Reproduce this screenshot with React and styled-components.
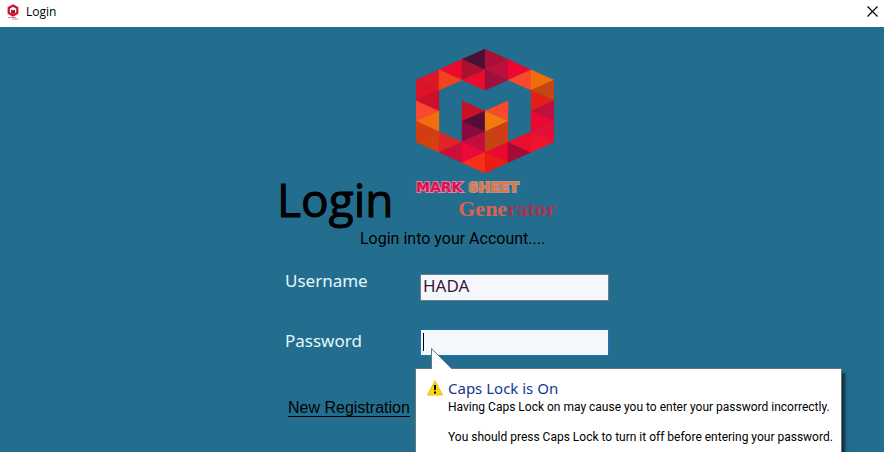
import React from "react";
import styled, { createGlobalStyle } from "styled-components";

const GlobalStyle = createGlobalStyle`
  *, *::before, *::after { box-sizing: border-box; }
  html, body { margin: 0; background: #236e8f; }
  h1, h2, p { margin: 0; font-weight: 400; }
`;

const uiFont = `"Open Sans", "Noto Sans", sans-serif`;

const Window = styled.div`
  display: flex;
  flex-direction: column;
  height: 100vh;
  overflow: hidden;
  background: #236e8f;
  font-family: ${uiFont};
  color: #000;
`;

const TitleBar = styled.header`
  display: flex;
  align-items: center;
  gap: 7px;
  flex: none;
  height: 27px;
  padding: 0 6px 4px 7px;
  background: #fff;
  font-size: 12px;
  line-height: 16px;
`;

const CloseButton = styled.button`
  display: flex;
  margin-left: auto;
  padding: 0;
  border: 0;
  background: none;
`;

const Main = styled.main`
  display: flex;
  justify-content: center;
  padding-top: 22px;
`;

const Form = styled.form`
  flex: 0 1 334px;
  display: flex;
  flex-direction: column;
  padding-left: 2px;
`;

const Heading = styled.div`
  display: flex;
  align-items: flex-end;
  gap: 24px;
`;

const Title = styled.h1`
  width: 115px;
  font-family: "Open Sans", sans-serif;
  font-size: 46px;
  line-height: 36px;
  -webkit-text-stroke: 1px #000;
`;

const Brand = styled.div`
  display: flex;
  flex-direction: column;
  width: 140px;
`;

const Word = styled.span`
  font-family: ${(p) => (p.$serif ? `"Liberation Serif", serif` : `"DejaVu Sans", sans-serif`)};
  font-weight: 700;
  font-size: ${(p) => (p.$serif ? "22px" : "14px")};
  line-height: ${(p) => (p.$serif ? "16px" : "28px")};
  color: ${(p) => p.$color};
  -webkit-text-stroke: ${(p) => (p.$edge ? `2px ${p.$edge}` : "0")};
  paint-order: stroke fill;
`;

const BrandLine = styled.div`
  display: flex;
  gap: ${(p) => (p.$end ? "0" : "6px")};
  justify-content: ${(p) => (p.$end ? "flex-end" : "flex-start")};
`;

const Subtitle = styled.h2`
  padding-left: 83px;
  margin-top: 10px;
  font-family: Roboto, sans-serif;
  font-size: 16px;
  font-weight: 400;
  line-height: 24px;
  white-space: nowrap;
`;

const Fields = styled.div`
  display: flex;
  flex-direction: column;
  gap: 28px;
  margin-top: 23px;
  padding-left: 8px;
`;

const Row = styled.div`
  display: flex;
  align-items: ${(p) => (p.$centered ? "center" : "flex-start")};
`;

const Label = styled.label`
  width: 135px;
  padding-bottom: 4px;
  font-family: "Noto Sans", sans-serif;
  font-size: 17px;
  line-height: 14px;
  color: #e4f7fb;
`;

const Control = styled.div`
  position: relative;
  flex: 1;
`;

const Input = styled.input`
  display: block;
  width: 100%;
  height: 27px;
  padding: 0 2px 4px;
  border: 1px solid ${(p) => (p.$active ? "#1874ba" : "#6d7c88")};
  border-radius: 0;
  outline: 0;
  background: #f4f8fd;
  background-image: ${(p) => (p.$active ? "linear-gradient(#000, #000)" : "none")};
  background-repeat: no-repeat;
  background-position: 2px 3px;
  background-size: 1px 18px;
  font-family: "Noto Sans", sans-serif;
  font-size: 17px;
  color: #431238;
`;

const Register = styled.a`
  align-self: flex-start;
  margin: 43px 0 0 11px;
  border-bottom: 1px solid #000;
  font-family: "Liberation Sans", Arial, sans-serif;
  font-size: 16px;
  line-height: 17px;
  color: #000;
  text-decoration: none;
`;

const Balloon = styled.div`
  position: absolute;
  top: 39px;
  left: -5px;
  display: grid;
  grid-template-columns: 16px auto;
  column-gap: 5px;
  padding: 9px 8px 12px 11px;
  border: 1px solid #6f7479;
  background: #fff;
  box-shadow: 4px 4px 3px -1px rgba(0, 0, 0, 0.6);
  white-space: nowrap;
`;

const Pointer = styled.svg`
  position: absolute;
  top: -21px;
  left: 15px;
`;

const BalloonTitle = styled.p`
  font-family: "Noto Sans", sans-serif;
  font-size: 15px;
  line-height: 20px;
  padding-bottom: 2px;
  color: #143695;
`;

const BalloonText = styled.p`
  grid-column: 2;
  font-family: Roboto, sans-serif;
  font-size: 12px;
  line-height: 15px;
  & + & { margin-top: 15px; }
`;

const WarningIcon = styled.svg`
  margin-top: 2px;
`;

// Each facet: three [column, row] vertices on the triangular grid, then its fill.
const facets = [
  [1, 2, 1, 4, 0, 3, "#d9182a"], [0, 3, 0, 5, 1, 4, "#dc1329"], [1, 4, 1, 6, 0, 5, "#cc1029"],
  [0, 5, 0, 7, 1, 6, "#fb4732"], [1, 6, 1, 8, 0, 7, "#f26d0d"], [0, 7, 0, 9, 1, 8, "#d33d10"],
  [1, 8, 1, 10, 0, 9, "#d6400f"],
  [2, 1, 2, 3, 1, 2, "#eb0a2b"], [1, 2, 1, 4, 2, 3, "#f3421e"],
  [1, 8, 1, 10, 2, 9, "#e02624"], [2, 9, 2, 11, 1, 10, "#cb0f37"],
  [3, 0, 3, 2, 2, 1, "#4b1035"], [2, 1, 2, 3, 3, 2, "#ab102d"], [3, 2, 3, 4, 2, 3, "#eb0b2e"],
  [2, 5, 2, 7, 3, 6, "#ca1029"], [3, 6, 3, 8, 2, 7, "#580a38"], [2, 7, 2, 9, 3, 8, "#8c0a3b"],
  [3, 8, 3, 10, 2, 9, "#c20e3d"], [2, 9, 2, 11, 3, 10, "#ea0939"], [3, 10, 3, 12, 2, 11, "#f83017"],
  [3, 0, 3, 2, 4, 1, "#ad1036"], [4, 1, 4, 3, 3, 2, "#bb103c"], [3, 2, 3, 4, 4, 3, "#a10f3e"],
  [4, 5, 4, 7, 3, 6, "#f94a2d"], [3, 6, 3, 8, 4, 7, "#f27b0d"], [4, 7, 4, 9, 3, 8, "#cf3d17"],
  [3, 8, 3, 10, 4, 9, "#c64412"], [4, 9, 4, 11, 3, 10, "#eb092e"], [3, 10, 3, 12, 4, 11, "#e91c17"],
  [4, 1, 4, 3, 5, 2, "#eb0731"], [5, 2, 5, 4, 4, 3, "#fa482d"],
  [4, 9, 4, 11, 5, 10, "#a60b35"], [5, 8, 5, 10, 4, 9, "#ea102d"],
  [5, 2, 5, 4, 6, 3, "#f06d0b"], [6, 3, 6, 5, 5, 4, "#c54513"], [5, 4, 5, 6, 6, 5, "#e22019"],
  [6, 5, 6, 7, 5, 6, "#c30f3e"], [5, 6, 5, 8, 6, 7, "#eb0830"], [6, 7, 6, 9, 5, 8, "#e21039"],
  [5, 8, 5, 10, 6, 9, "#f0122f"],
];

function Emblem({ width, height }) {
  return (
    <svg width={width} height={height} viewBox="0 0 414 372" aria-hidden="true">
      {facets.map(([a, b, c, d, e, f, fill], i) => (
        <polygon
          key={i}
          points={`${a * 69},${b * 31} ${c * 69},${d * 31} ${e * 69},${f * 31}`}
          fill={fill}
          stroke={fill}
          strokeWidth="1"
        />
      ))}
    </svg>
  );
}

function AppIcon() {
  return (
    <svg width="12" height="16" viewBox="0 0 12 16" aria-hidden="true">
      <path d="M6 1.5 10.3 4v5L6 11.500 1.700 9V4Z" fill="none" stroke="#c9162f" strokeWidth="2.200" />
      <path d="M4 5.500 6 6.500l2-1V9L6 10 4 9Z" fill="#a5122f" />
      <path d="M1 13.500h8M5 15h6" stroke="#d9808c" strokeWidth="1" />
    </svg>
  );
}

export default function App() {
  return (
    <Window>
      <GlobalStyle />
      <TitleBar>
        <AppIcon />
        <span>Login</span>
        <CloseButton type="button" aria-label="Close">
          <svg width="11" height="11" viewBox="0 0 11 11">
            <path d="M.5.5l10 10M10.500.5l-10 10" stroke="#000" strokeWidth="1.200" />
          </svg>
        </CloseButton>
      </TitleBar>
      <Main>
        <Form onSubmit={(e) => e.preventDefault()}>
          <Heading>
            <Title>Login</Title>
            <Brand>
              <Emblem width={138} height={124} />
              <BrandLine>
                <Word $color="#d91346" $edge="#e37fae">MARK</Word>
                <Word $color="#d87948" $edge="#b79095">SHEET</Word>
              </BrandLine>
              <BrandLine $end>
                <Word $serif $color="#d9634e">Gene</Word>
                <Word $serif $color="#a93450">rator</Word>
              </BrandLine>
            </Brand>
          </Heading>
          <Subtitle>Login into your Account....</Subtitle>
          <Fields>
            <Row>
              <Label htmlFor="username">Username</Label>
              <Control>
                <Input id="username" type="text" defaultValue="HADA" />
              </Control>
            </Row>
            <Row $centered>
              <Label htmlFor="password">Password</Label>
              <Control>
                <Input id="password" type="password" $active aria-describedby="caps-lock" />
                <Balloon id="caps-lock" role="tooltip">
                  <Pointer width="22" height="22" viewBox="0 0 22 22" aria-hidden="true">
                    <path d="M.5 22V.5L21 21v1Z" fill="#fff" />
                    <path d="M.5 21V.5L21 21" fill="none" stroke="#6f7479" />
                  </Pointer>
                  <WarningIcon width="16" height="16" viewBox="0 0 16 16" aria-hidden="true">
                    <path d="M8 .8 15.500 15H.5Z" fill="#ffd411" stroke="#eabd18" strokeLinejoin="round" />
                    <path d="M8 5v5M8 11.500v2" stroke="#000" strokeWidth="2" />
                  </WarningIcon>
                  <BalloonTitle>Caps Lock is On</BalloonTitle>
                  <BalloonText>Having Caps Lock on may cause you to enter your password incorrectly.</BalloonText>
                  <BalloonText>You should press Caps Lock to turn it off before entering your password.</BalloonText>
                </Balloon>
              </Control>
            </Row>
          </Fields>
          <Register href="#register">New Registration</Register>
        </Form>
      </Main>
    </Window>
  );
}
